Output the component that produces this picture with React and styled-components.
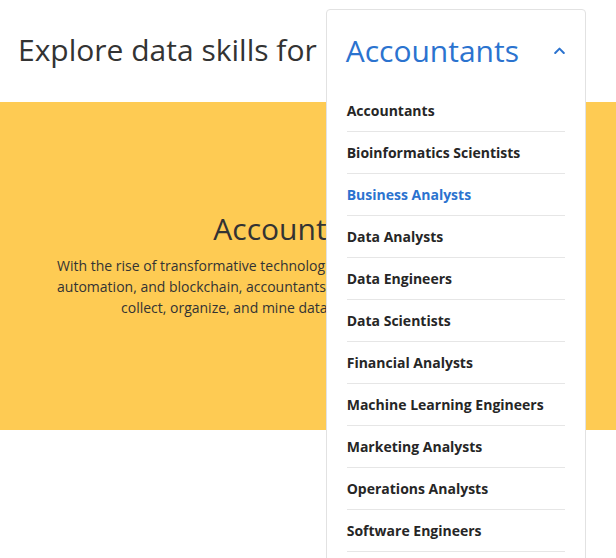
import styled, { createGlobalStyle } from 'styled-components';

const GlobalStyle = createGlobalStyle`
  html, body {
    margin: 0;
    padding: 0;
    background: #fff;
    font-family: "Open Sans", "Noto Sans", sans-serif;
    color: #333;
  }
  * { box-sizing: border-box; }
`;

const roles = [
  'Accountants',
  'Bioinformatics Scientists',
  'Business Analysts',
  'Data Analysts',
  'Data Engineers',
  'Data Scientists',
  'Financial Analysts',
  'Machine Learning Engineers',
  'Marketing Analysts',
  'Operations Analysts',
  'Software Engineers',
  'Statisticians',
];

const Page = styled.div`
  width: 100%;
  min-height: 558px;
  overflow: hidden;
`;

const Header = styled.header`
  display: flex;
  align-items: flex-start;
  gap: 9px;
  height: 102px;
  padding-left: 18px;
`;

const Heading = styled.h1`
  margin: 0;
  padding-top: 30px;
  font-size: 30px;
  line-height: 40px;
  font-weight: 400;
  color: #333;
  white-space: nowrap;
`;

const DropdownSlot = styled.div`
  position: relative;
  width: 260px;
  height: 82px;
  margin-top: 9px;
  flex-shrink: 0;
`;

const Panel = styled.div`
  position: absolute;
  top: 0;
  left: 0;
  right: 0;
  z-index: 10;
  background: #fff;
  border: 1px solid #e2e2e2;
  border-radius: 4px;
  padding-bottom: 12px;
`;

const Trigger = styled.button`
  display: flex;
  align-items: center;
  justify-content: space-between;
  width: 100%;
  height: 80px;
  padding: 0 20px 0 19px;
  border: 0;
  background: transparent;
  font-family: inherit;
  font-size: 30px;
  font-weight: 400;
  color: #2b73cf;
  cursor: pointer;
`;

const List = styled.ul`
  list-style: none;
  margin: 0;
  padding: 0 20px;
`;

const Item = styled.li`
  display: flex;
  align-items: center;
  height: 42px;
  border-bottom: 1px solid #e6e6e6;
  font-size: 14px;
  font-weight: 700;
  color: ${p => (p.$active ? '#2b73cf' : '#262626')};
`;

const Band = styled.section`
  display: flex;
  flex-direction: column;
  align-items: center;
  justify-content: center;
  height: 328px;
  padding: 0 48px 6px 32px;
  background: #fecb53;
  text-align: center;
`;

const BandTitle = styled.h2`
  margin: 0 0 6px;
  font-size: 30px;
  line-height: 40px;
  font-weight: 400;
  color: #333;
`;

const BandText = styled.p`
  margin: 0;
  font-size: 14px;
  line-height: 21px;
  color: #333;
  white-space: nowrap;
`;

const Chevron = () => (
  <svg width="11" height="7" viewBox="0 0 11 7" fill="none">
    <path d="M1.2 6 L5.5 1.6 L9.8 6" stroke="#2b73cf" strokeWidth="2" strokeLinecap="round" strokeLinejoin="round" />
  </svg>
);

export default function App() {
  return (
    <Page>
      <GlobalStyle />
      <Header>
        <Heading>Explore data skills for</Heading>
        <DropdownSlot>
          <Panel>
            <Trigger>
              <span>Accountants</span>
              <Chevron />
            </Trigger>
            <List>
              {roles.map(r => (
                <Item key={r} $active={r === 'Business Analysts'}>{r}</Item>
              ))}
            </List>
          </Panel>
        </DropdownSlot>
      </Header>
      <Band>
        <BandTitle>Accountants</BandTitle>
        <BandText>
          With the rise of transformative technologies including artificial intelligence,<br />
          automation, and blockchain, accountants need the right skills to effectively<br />
          collect, organize, and mine data for actionable insights.
        </BandText>
      </Band>
    </Page>
  );
}
